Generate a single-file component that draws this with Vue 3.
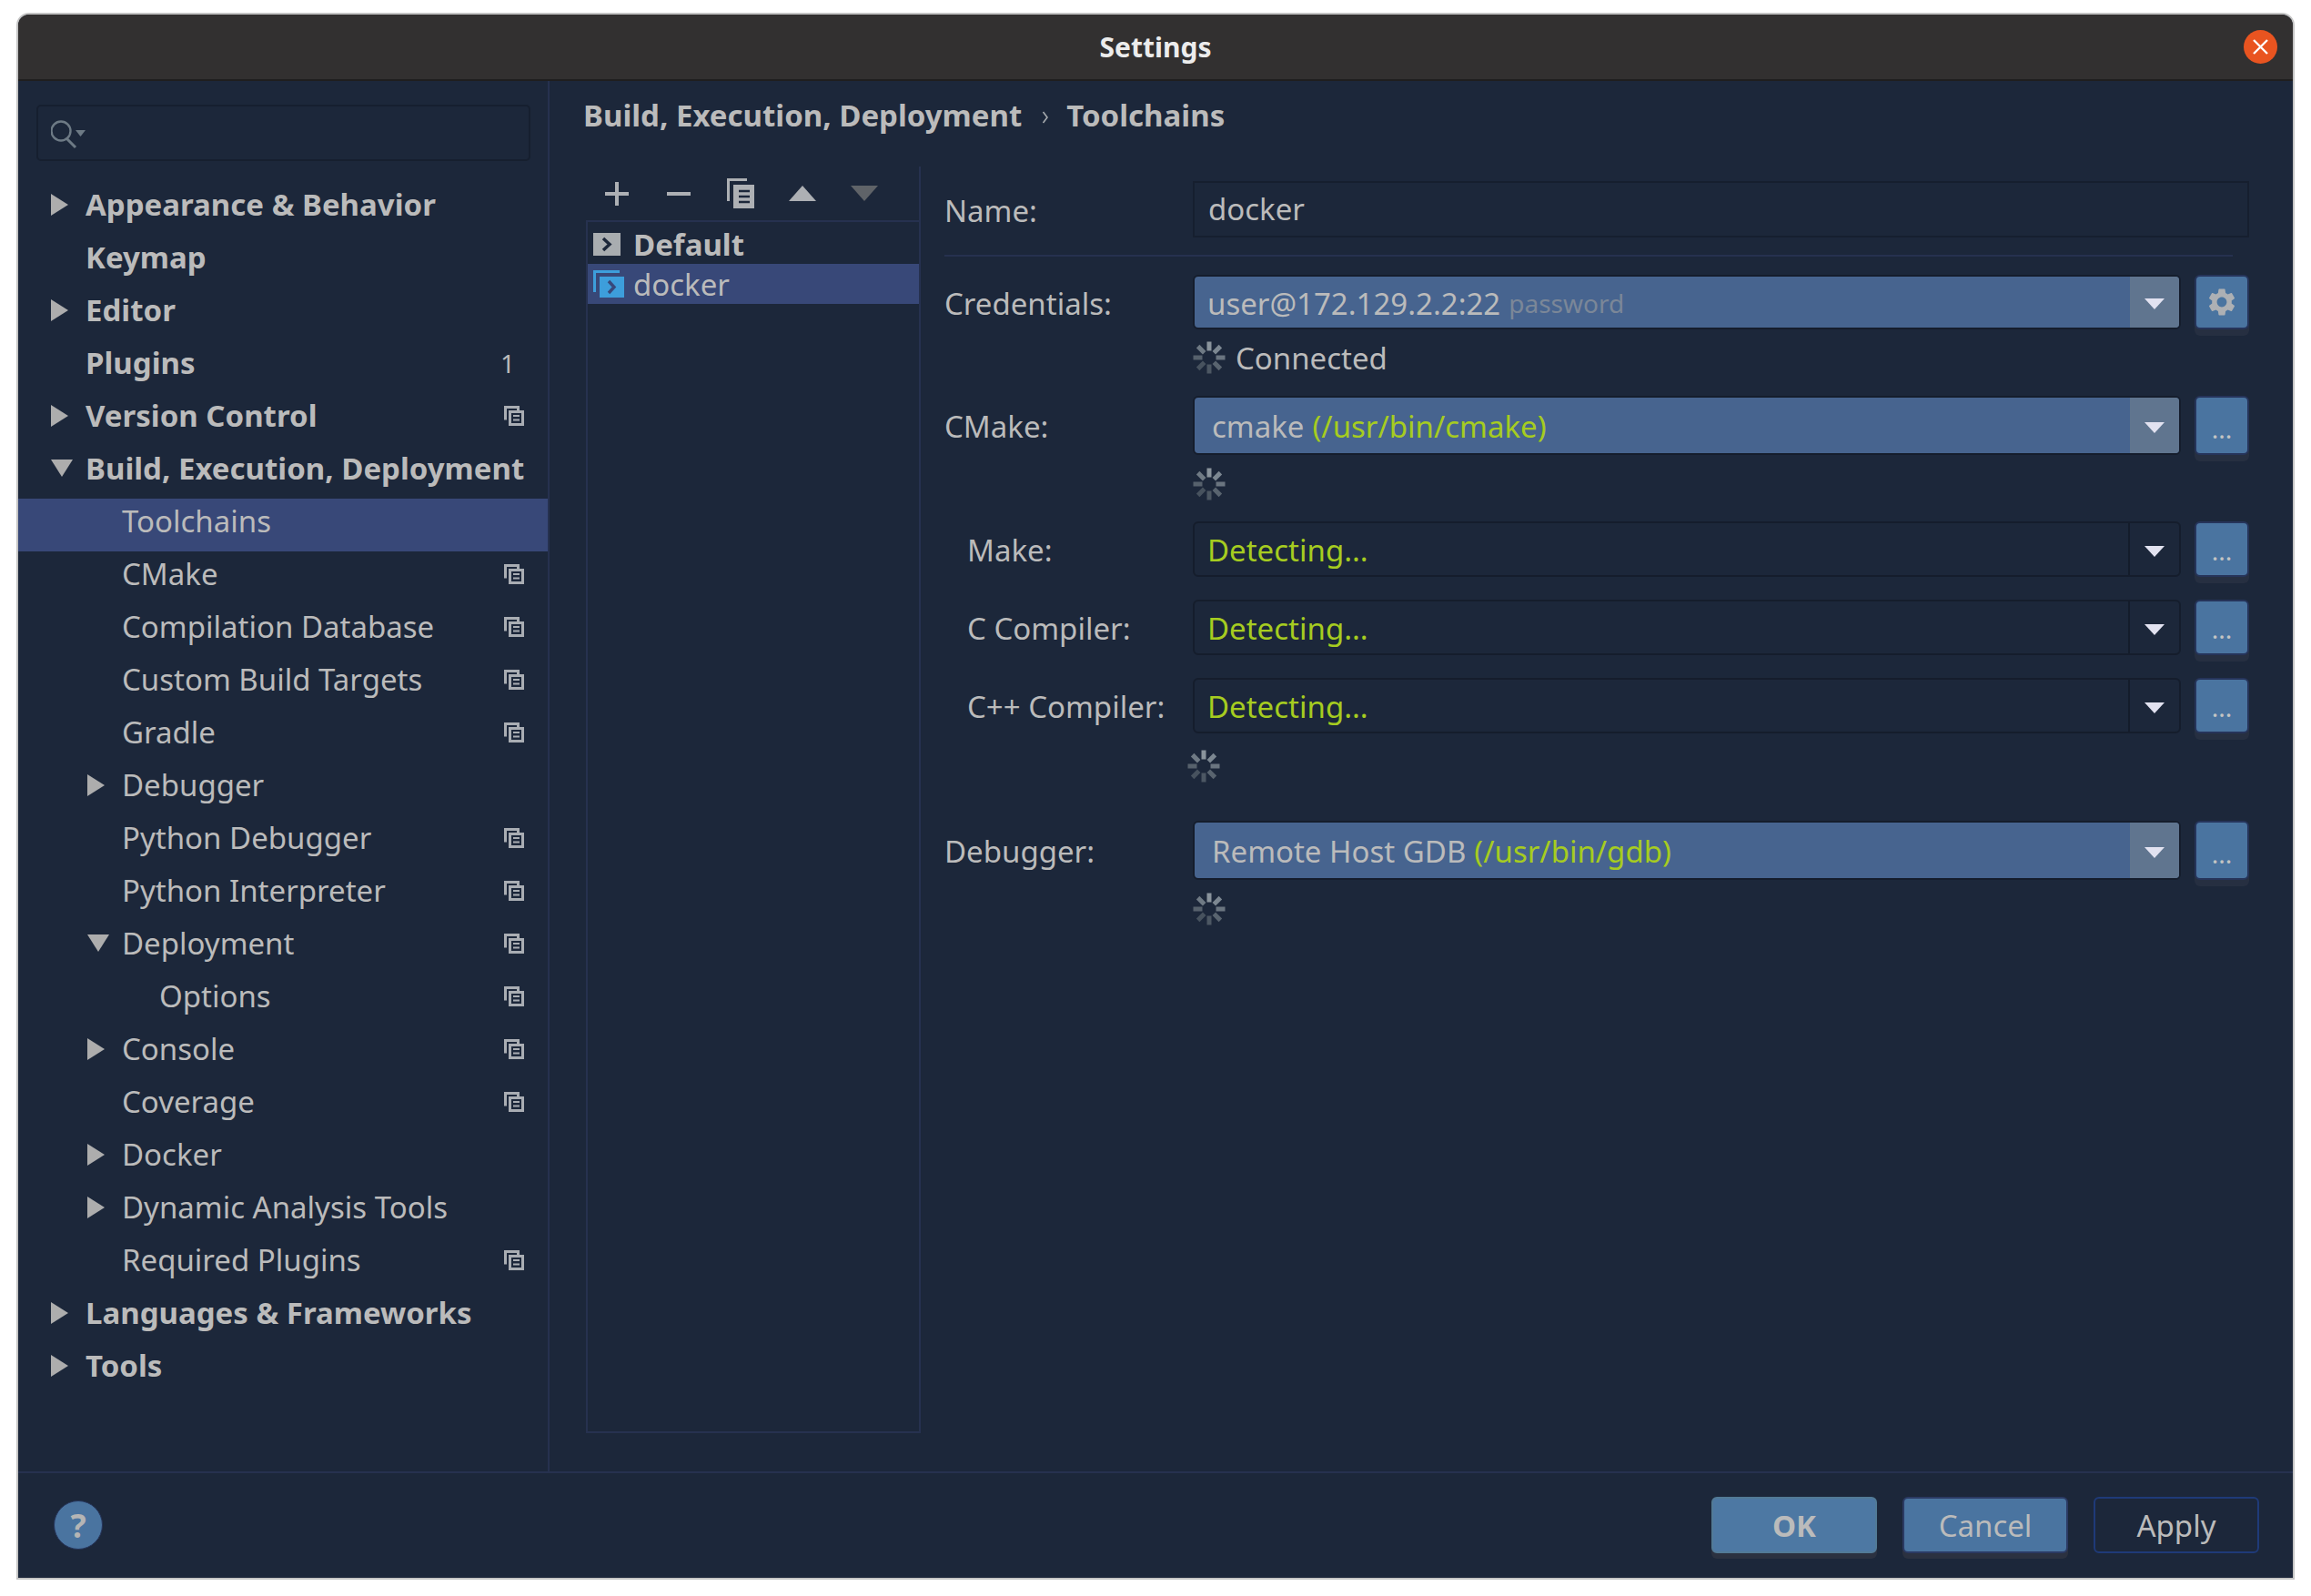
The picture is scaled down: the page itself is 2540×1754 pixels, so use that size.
<template>
  <div class="window">
    <header class="titlebar">
      <span class="title">Settings</span>
      <span class="close">
        <svg width="19" height="19" viewBox="0 0 19 19"><path d="M2 2 L17 17 M17 2 L2 17" stroke="#fff" stroke-width="2.4" /></svg>
      </span>
    </header>

    <div class="content">
      <aside class="sidebar">
        <div class="search">
          <svg class="search__icon" width="40" height="32" viewBox="0 0 40 32">
            <circle cx="11" cy="12" r="10.500" fill="none" stroke="#6d7a85" stroke-width="2.4" />
            <path d="M17 20 L27 30" stroke="#6d7a85" stroke-width="3" />
            <path d="M27 11 H38 L32.500 18 Z" fill="#6d7a85" />
          </svg>
        </div>
        <ul class="tree">
          <li
            v-for="item in tree"
            :key="item.label"
            class="tree__row"
            :class="[`tree__row--l${item.level}`, { 'tree__row--active': item.active }]"
          >
            <span v-if="item.arrow" class="arrow" :class="`arrow--${item.arrow}`"></span>
            <span class="tree__label">{{ item.label }}</span>
            <span v-if="item.badge" class="badge">{{ item.badge }}</span>
            <svg v-if="item.project" class="project-icon" width="22" height="22" viewBox="0 0 22 22">
              <path d="M1.500 15.500 V1.500 H15.500 V5" fill="none" stroke="#a9adb3" stroke-width="3" />
              <rect x="6.500" y="6.500" width="14" height="14" fill="#1c273a" stroke="#a9adb3" stroke-width="3" />
              <path d="M10 11 H17 M10 15.500 H17" stroke="#a9adb3" stroke-width="2.200" />
            </svg>
          </li>
        </ul>
      </aside>

      <main class="main">
        <div class="crumbs">
          <span>Build, Execution, Deployment</span>
          <svg class="crumbs__sep" width="8" height="16" viewBox="0 0 8 16"><path d="M1.500 2 L6 8 L1.500 14" fill="none" stroke="#a5a9ad" stroke-width="1.600" /></svg>
          <span>Toolchains</span>
        </div>

        <div class="panel">
          <section class="chains">
            <div class="toolbar">
              <svg width="26" height="26" viewBox="0 0 26 26"><path d="M13 0 V26 M0 13 H26" stroke="#adb0b4" stroke-width="4" /></svg>
              <svg width="26" height="26" viewBox="0 0 26 26"><path d="M0 13 H26" stroke="#adb0b4" stroke-width="4" /></svg>
              <svg width="30" height="33" viewBox="0 0 30 33">
                <path d="M1.500 25 V1.500 H22" fill="none" stroke="#adb0b4" stroke-width="3" />
                <path d="M7 7 H30 V33 H7 Z" fill="#adb0b4" />
                <path d="M13 14 H25 M13 20 H25 M13 26 H25" stroke="#1c273a" stroke-width="2.600" />
              </svg>
              <svg width="30" height="17" viewBox="0 0 30 17"><path d="M15 0 L30 17 H0 Z" fill="#adb0b4" /></svg>
              <svg width="30" height="17" viewBox="0 0 30 17"><path d="M0 0 H30 L15 17 Z" fill="#5f6368" /></svg>
            </div>
            <div class="chains__list">
              <div class="chain chain--default">
                <svg width="30" height="25" viewBox="0 0 30 25">
                  <rect width="30" height="25" fill="#a9adb0" />
                  <path d="M11 6 L18 12.500 L11 19" fill="none" stroke="#1c273a" stroke-width="3.500" />
                </svg>
                <span>Default</span>
              </div>
              <div class="chain chain--active">
                <svg width="34" height="30" viewBox="0 0 34 30">
                  <path d="M1.500 24 V1.500 H29" fill="none" stroke="#3d9edb" stroke-width="3" />
                  <rect x="7" y="7" width="27" height="23" fill="#3d9edb" />
                  <path d="M17 12 L23 18.500 L17 25" fill="none" stroke="#38487a" stroke-width="3.400" />
                </svg>
                <span>docker</span>
              </div>
            </div>
          </section>

          <section class="form">
            <div class="row row--name">
              <label class="row__label">Name:</label>
              <div class="name-input">docker</div>
            </div>
            <div class="separator"></div>

            <div class="row">
              <label class="row__label">Credentials:</label>
              <div class="combo combo--filled">
                <span class="combo__text">user@172.129.2.2:22 <small class="muted">password</small></span>
                <span class="combo__arrow"></span>
              </div>
              <button class="side-btn">
                <svg width="36" height="36" viewBox="0 0 24 24"><path fill="#adb0b4" d="M19.140 12.940c.04-.3.06-.61.06-.94 0-.32-.02-.64-.07-.94l2.030-1.580c.18-.14.23-.41.12-.61l-1.920-3.320c-.12-.22-.37-.29-.59-.22l-2.390.96c-.5-.38-1.030-.7-1.620-.94l-.36-2.540c-.04-.24-.24-.41-.48-.41h-3.840c-.24 0-.43.17-.47.41l-.36 2.540c-.59.24-1.130.57-1.620.94l-2.390-.96c-.22-.08-.47 0-.59.22L2.740 8.870c-.12.21-.08.47.12.61l2.030 1.580c-.05.3-.09.63-.09.94s.02.64.07.94l-2.030 1.580c-.18.14-.23.41-.12.61l1.920 3.320c.12.22.37.29.59.22l2.390-.96c.5.38 1.030.7 1.620.94l.36 2.540c.05.24.24.41.48.41h3.840c.24 0 .44-.17.47-.41l.36-2.540c.59-.24 1.130-.56 1.620-.94l2.390.96c.22.08.47 0 .59-.22l1.920-3.320c.12-.22.07-.47-.12-.61l-2.010-1.580zM12 15.600c-1.980 0-3.600-1.620-3.600-3.600s1.620-3.600 3.600-3.600 3.600 1.620 3.600 3.600-1.620 3.600-3.600 3.600z" /></svg>
              </button>
            </div>
            <div class="status status--connected">
              <svg class="spinner" width="36" height="36" viewBox="-18 -18 36 36">
                <rect v-for="s in spokes" :key="s.angle" x="-2.500" y="-17.500" width="5" height="10" :fill="s.fill" :transform="`rotate(${s.angle})`" />
              </svg>
              <span>Connected</span>
            </div>

            <div class="row row--tall">
              <label class="row__label">CMake:</label>
              <div class="combo combo--filled">
                <span class="combo__text combo__text--inset">cmake <em class="path">(/usr/bin/cmake)</em></span>
                <span class="combo__arrow"></span>
              </div>
              <button class="side-btn side-btn--dots">...</button>
            </div>
            <div class="status status--cmake">
              <svg class="spinner" width="36" height="36" viewBox="-18 -18 36 36">
                <rect v-for="s in spokes" :key="s.angle" x="-2.500" y="-17.500" width="5" height="10" :fill="s.fill" :transform="`rotate(${s.angle})`" />
              </svg>
            </div>

            <div
              v-for="tool in tools"
              :key="tool"
              class="row row--tool"
            >
              <label class="row__label row__label--sub">{{ tool }}</label>
              <div class="combo">
                <span class="combo__text path">Detecting...</span>
                <span class="combo__arrow"></span>
              </div>
              <button class="side-btn side-btn--dots">...</button>
            </div>
            <div class="status status--tools">
              <svg class="spinner" width="36" height="36" viewBox="-18 -18 36 36">
                <rect v-for="s in spokes" :key="s.angle" x="-2.500" y="-17.500" width="5" height="10" :fill="s.fill" :transform="`rotate(${s.angle})`" />
              </svg>
            </div>

            <div class="row row--tall">
              <label class="row__label">Debugger:</label>
              <div class="combo combo--filled">
                <span class="combo__text combo__text--inset">Remote Host GDB <em class="path">(/usr/bin/gdb)</em></span>
                <span class="combo__arrow"></span>
              </div>
              <button class="side-btn side-btn--dots">...</button>
            </div>
            <div class="status status--debugger">
              <svg class="spinner" width="36" height="36" viewBox="-18 -18 36 36">
                <rect v-for="s in spokes" :key="s.angle" x="-2.500" y="-17.500" width="5" height="10" :fill="s.fill" :transform="`rotate(${s.angle})`" />
              </svg>
            </div>
          </section>
        </div>
      </main>
    </div>

    <footer class="footer">
      <span class="help">?</span>
      <div class="actions">
        <button class="btn btn--ok">OK</button>
        <button class="btn btn--cancel">Cancel</button>
        <button class="btn btn--apply">Apply</button>
      </div>
    </footer>
  </div>
</template>

<script setup>
const tree = [
  { label: "Appearance & Behavior", level: 0, arrow: "right" },
  { label: "Keymap", level: 0 },
  { label: "Editor", level: 0, arrow: "right" },
  { label: "Plugins", level: 0, badge: "1" },
  { label: "Version Control", level: 0, arrow: "right", project: true },
  { label: "Build, Execution, Deployment", level: 0, arrow: "down" },
  { label: "Toolchains", level: 1, active: true },
  { label: "CMake", level: 1, project: true },
  { label: "Compilation Database", level: 1, project: true },
  { label: "Custom Build Targets", level: 1, project: true },
  { label: "Gradle", level: 1, project: true },
  { label: "Debugger", level: 1, arrow: "right" },
  { label: "Python Debugger", level: 1, project: true },
  { label: "Python Interpreter", level: 1, project: true },
  { label: "Deployment", level: 1, arrow: "down", project: true },
  { label: "Options", level: 2, project: true },
  { label: "Console", level: 1, arrow: "right", project: true },
  { label: "Coverage", level: 1, project: true },
  { label: "Docker", level: 1, arrow: "right" },
  { label: "Dynamic Analysis Tools", level: 1, arrow: "right" },
  { label: "Required Plugins", level: 1, project: true },
  { label: "Languages & Frameworks", level: 0, arrow: "right" },
  { label: "Tools", level: 0, arrow: "right" },
];

const tools = ["Make:", "C Compiler:", "C++ Compiler:"];

const spokeFills = ["#8a949c", "#7c8791", "#6a7580", "#59646f", "#4c5763", "#47525e", "#56616c", "#6f7a84"];
const spokes = spokeFills.map((fill, i) => ({ angle: i * 45, fill }));
</script>

<style>
html,
body {
  margin: 0;
  background: #fff;
}
</style>

<style scoped>
* {
  box-sizing: border-box;
}

.window {
  width: 2504px;
  height: 1722px;
  margin: 14px 0 0 18px;
  display: flex;
  flex-direction: column;
  overflow: hidden;
  background: #1c273a;
  border: 2px solid #c4c4c4;
  border-top-left-radius: 14px;
  border-top-right-radius: 14px;
  font-family: "Noto Sans", sans-serif;
  font-size: 33px;
  color: #bbbbbb;
}

.titlebar {
  position: relative;
  flex: none;
  height: 73px;
  display: flex;
  align-items: center;
  justify-content: center;
  background: #323030;
  border-bottom: 2px solid #1f1e1e;
}

.title {
  font-size: 30px;
  font-weight: 700;
  color: #ececec;
}

.close {
  position: absolute;
  right: 17px;
  top: 17px;
  width: 37px;
  height: 37px;
  display: flex;
  align-items: center;
  justify-content: center;
  border-radius: 50%;
  background: #e95420;
}

.content {
  flex: 1;
  display: flex;
  min-height: 0;
}

.sidebar {
  flex: none;
  width: 584px;
  border-right: 2px solid #26314f;
}

.search {
  width: 543px;
  height: 62px;
  margin: 26px 0 0 20px;
  padding: 15px 0 0 14px;
  border: 2px solid #161f2f;
  border-radius: 5px;
}

.search__icon {
  display: block;
}

.tree {
  margin: 23px 0 0;
  padding: 0;
  list-style: none;
}

.tree__row {
  position: relative;
  height: 58px;
  display: flex;
  align-items: center;
  padding-right: 26px;
  padding-bottom: 9px;
}

.tree__row--l0 {
  padding-left: 74px;
  font-weight: 700;
}

.tree__row--l1 {
  padding-left: 114px;
}

.tree__row--l2 {
  padding-left: 155px;
}

.tree__row--active {
  background: #384878;
}

.tree__label {
  flex: 1;
  white-space: nowrap;
}

.arrow {
  position: absolute;
  width: 0;
  height: 0;
}

.arrow--right {
  margin-left: -38px;
  border-top: 12px solid transparent;
  border-bottom: 12px solid transparent;
  border-left: 19px solid #adadad;
}

.arrow--down {
  margin-left: -38px;
  border-left: 12px solid transparent;
  border-right: 12px solid transparent;
  border-top: 19px solid #adadad;
}

.badge {
  margin-right: 10px;
  font-size: 28px;
  font-weight: 400;
}

.crumbs {
  flex: none;
  height: 94px;
  display: flex;
  align-items: flex-start;
  padding: 15px 0 0 37px;
  font-weight: 700;
}

.crumbs__sep {
  margin: 17px 19px 0 22px;
}

.main {
  flex: 1;
  min-width: 0;
  display: flex;
  flex-direction: column;
}

.panel {
  flex: 1;
  display: flex;
  min-height: 0;
  padding: 0 48px 42px 40px;
}

.chains {
  flex: none;
  width: 368px;
  display: flex;
  flex-direction: column;
  border-right: 2px solid #26314f;
}

.toolbar {
  flex: none;
  height: 59px;
  display: flex;
  align-items: center;
  gap: 38px;
  padding: 0 0 0 21px;
}

.toolbar svg:nth-child(1) {
  margin-right: 4px;
}

.toolbar svg:nth-child(2) {
  margin-right: 2px;
}

.chains__list {
  flex: 1;
  padding-top: 2px;
  border: 2px solid #26314f;
  border-right: none;
}

.chain {
  height: 44px;
  display: flex;
  align-items: center;
  gap: 11px;
  padding-left: 6px;
}

.chain--default {
  gap: 14px;
  font-weight: 700;
}

.chain--active {
  background: #384878;
}

.chain--active svg {
  margin-right: -1px;
}

.form {
  flex: 1;
  min-width: 0;
  padding: 16px 0 0 26px;
}

.row {
  display: flex;
  align-items: center;
  height: 60px;
  gap: 15px;
}

.row--name {
  height: 62px;
  gap: 0;
}

.row--tall {
  height: 65px;
}

.row--tool {
  height: 61px;
  margin-bottom: 25px;
}

.row__label {
  flex: none;
  width: 258px;
  padding-top: 2px;
  white-space: nowrap;
}

.row--name .row__label {
  width: 273px;
}

.row__label--sub {
  padding-left: 25px;
}

.name-input {
  flex: 1;
  height: 100%;
  padding-left: 15px;
  line-height: 58px;
  border: 2px solid #161f2f;
}

.separator {
  height: 2px;
  margin: 19px 18px 20px 0;
  background: #26314f;
}

.combo {
  flex: 1;
  min-width: 0;
  height: 100%;
  display: flex;
  border: 2px solid #151d2c;
  border-radius: 6px;
  overflow: hidden;
}

.combo--filled {
  background: #47648f;
}

.combo__text {
  flex: 1;
  display: flex;
  align-items: center;
  gap: 9px;
  padding: 2px 0 0 14px;
  white-space: nowrap;
}

.combo__text--inset {
  padding-left: 19px;
}

.combo__arrow {
  position: relative;
  flex: none;
  width: 56px;
  box-shadow: inset 2px 0 0 #141c2b;
}

.combo--filled .combo__arrow {
  box-shadow: inset 2px 0 0 #47648f;
  background: #60758f;
}

.combo__arrow::after {
  content: "";
  position: absolute;
  left: 18px;
  top: 50%;
  margin-top: -4px;
  border-left: 11px solid transparent;
  border-right: 11px solid transparent;
  border-top: 12px solid #e2e2f0;
}

.muted {
  font-size: 28px;
  color: #7b8798;
}

.path {
  font-style: normal;
  color: #a6cc20;
}

.side-btn {
  flex: none;
  width: 60px;
  height: 100%;
  padding: 0;
  display: flex;
  align-items: center;
  justify-content: center;
  background: #4a74a0;
  border: 2px solid #26345a;
  border-radius: 6px;
  box-shadow: 0 7px 0 #262f41;
  color: #c4c4c4;
}

.side-btn--dots {
  align-items: flex-end;
  padding-bottom: 13px;
  font-family: inherit;
  font-size: 28px;
  line-height: 1;
}

.status {
  display: flex;
  align-items: center;
  gap: 11px;
  padding-left: 273px;
}

.status--connected {
  height: 62px;
  margin-bottom: 11px;
}

.status--cmake {
  height: 64px;
  margin-bottom: 9px;
}

.status--tools {
  height: 72px;
  margin: -25px 0 24px;
  padding-left: 267px;
}

.status--debugger {
  height: 64px;
}

.footer {
  flex: none;
  height: 117px;
  display: flex;
  align-items: flex-start;
  justify-content: space-between;
  padding: 26px 37px 0 39px;
  border-top: 2px solid #26314f;
}

.help {
  width: 54px;
  height: 54px;
  margin-top: 4px;
  display: flex;
  align-items: center;
  justify-content: center;
  border-radius: 50%;
  background: #4a74a0;
  border: 1px solid #26345a;
  font-size: 36px;
  font-weight: 700;
  color: #b5b5b5;
}

.actions {
  display: flex;
  gap: 28px;
}

.btn {
  width: 182px;
  height: 62px;
  padding: 0;
  border-radius: 6px;
  font-family: inherit;
  font-size: 33px;
  color: #bbbbbb;
}

.btn--ok {
  font-weight: 700;
  background: #4d78a3;
  border: 2px solid #527a96;
  box-shadow: 0 6px 0 #2b3140;
}

.btn--cancel {
  background: #4a74a0;
  border: 2px solid #2b3a63;
  box-shadow: 0 6px 0 #2b3140;
}

.btn--apply {
  background: transparent;
  border: 2px solid #1f3a78;
}
</style>
